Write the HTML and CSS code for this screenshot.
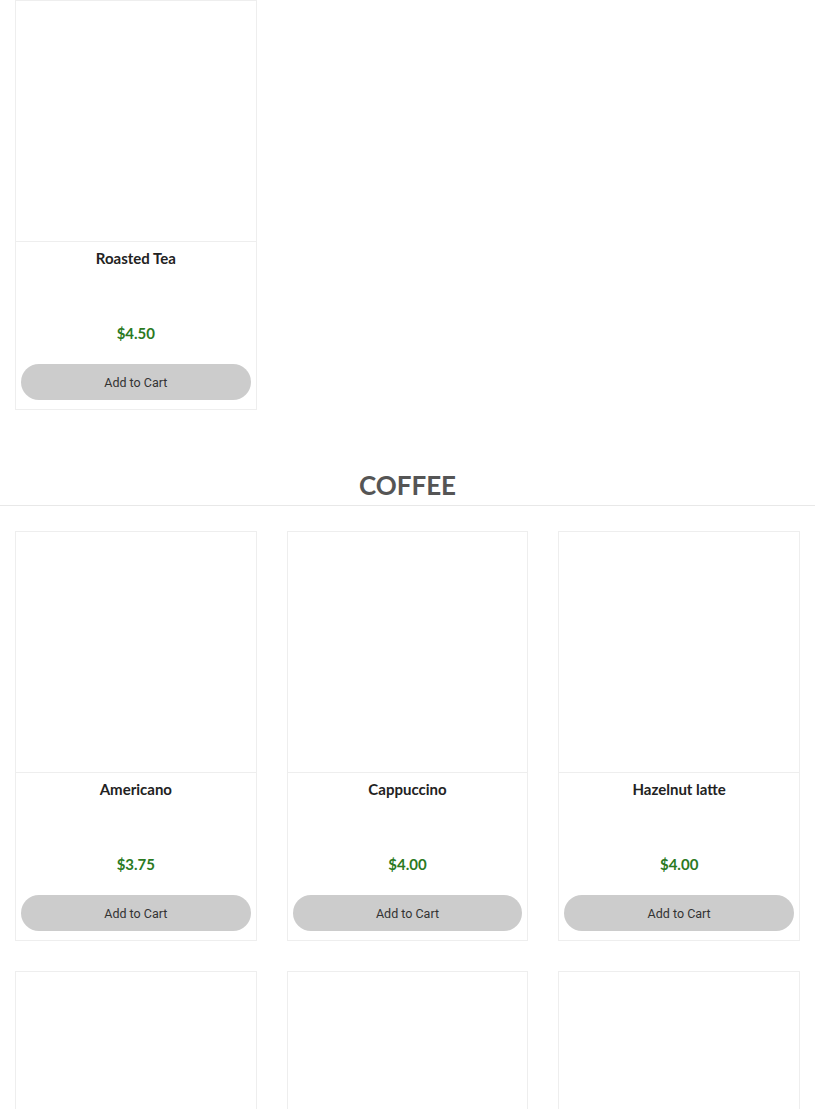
FILE: index.html
```html
<!DOCTYPE html>
<html lang="en">
<head>
    <meta charset="UTF-8">
    <meta name="viewport" content="width=device-width, initial-scale=1.0">
    <title>Menu</title>
    <link rel="stylesheet" href="styles.css">
</head>
<body>

    <div class="menu-section">
        <div class="product-grid">
            <div class="product-card">
                <div class="product-image"></div>
                <div class="product-body">
                    <div class="product-name">Roasted Tea</div>
                    <div class="product-price">$4.50</div>
                    <button class="cart-btn">Add to Cart</button>
                </div>
            </div>
        </div>
    </div>

    <div class="menu-section">
        <div class="section-header">
            <h2>COFFEE</h2>
        </div>
        <div class="product-grid">
            <div class="product-card">
                <div class="product-image"></div>
                <div class="product-body">
                    <div class="product-name">Americano</div>
                    <div class="product-price">$3.75</div>
                    <button class="cart-btn">Add to Cart</button>
                </div>
            </div>
            <div class="product-card">
                <div class="product-image"></div>
                <div class="product-body">
                    <div class="product-name">Cappuccino</div>
                    <div class="product-price">$4.00</div>
                    <button class="cart-btn">Add to Cart</button>
                </div>
            </div>
            <div class="product-card">
                <div class="product-image"></div>
                <div class="product-body">
                    <div class="product-name">Hazelnut latte</div>
                    <div class="product-price">$4.00</div>
                    <button class="cart-btn">Add to Cart</button>
                </div>
            </div>
            <div class="product-card">
                <div class="product-image"></div>
                <div class="product-body">
                    <div class="product-name">Caramel Macchiato</div>
                    <div class="product-price">$4.50</div>
                    <button class="cart-btn">Add to Cart</button>
                </div>
            </div>
            <div class="product-card">
                <div class="product-image"></div>
                <div class="product-body">
                    <div class="product-name">Mocha</div>
                    <div class="product-price">$4.25</div>
                    <button class="cart-btn">Add to Cart</button>
                </div>
            </div>
            <div class="product-card">
                <div class="product-image"></div>
                <div class="product-body">
                    <div class="product-name">Flat White</div>
                    <div class="product-price">$4.00</div>
                    <button class="cart-btn">Add to Cart</button>
                </div>
            </div>
        </div>
    </div>

</body>
</html>
```

FILE: styles.css
```css
body {
    font-family: Lato, "Open Sans", Arial, sans-serif;
    margin: 0;
    padding: 0;
    background-color: #fff;
    color: #333;
}

.menu-section {
    margin-bottom: 60px;
}

.section-header {
    text-align: center;
    padding-bottom: 5px;
    border-bottom: 1px solid #e8e8e8;
    margin-bottom: 25px;
}

.section-header h2 {
    margin: 0;
    font-size: 26px;
    line-height: 30px;
    font-weight: 700;
    color: #555;
}

.product-grid {
    display: grid;
    grid-template-columns: repeat(3, 1fr);
    column-gap: 30px;
    row-gap: 30px;
    padding: 0 15px;
}

.product-card {
    border: 1px solid #eee;
    background-color: #fff;
}

.product-image {
    height: 240px;
    border-bottom: 1px solid #eee;
}

.product-body {
    padding: 8px 5px 9px;
    text-align: center;
}

.product-name {
    height: 73px;
    font-size: 15px;
    line-height: 17px;
    font-weight: 700;
    color: #222;
}

.product-price {
    height: 20px;
    line-height: 20px;
    font-size: 15px;
    font-weight: 700;
    color: #2b7a1f;
    margin-bottom: 21px;
}

.cart-btn {
    display: block;
    width: 100%;
    height: 36px;
    padding: 0;
    background-color: #cccccc;
    color: #333;
    border: none;
    border-radius: 18px;
    font-family: Roboto, Arial, sans-serif;
    font-size: 12.5px;
    cursor: pointer;
}

.cart-btn:hover {
    background-color: #bbb;
}
```
